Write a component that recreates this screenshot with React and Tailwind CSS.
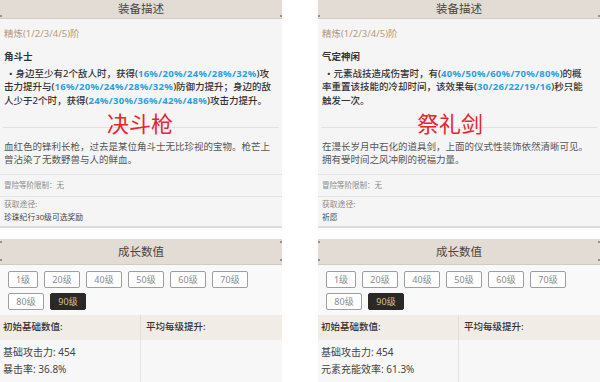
import React from "react";

const B = ({ children }) => (
  <span className="font-bold tracking-[0.3px] text-[#2a9ee0]">{children}</span>
);

const panels = [
  {
    key: "l",
    name: "角斗士",
    lines: [
      <>・身边至少有2个敌人时，获得(<B>16%/20%/24%/28%/32%</B>)攻</>,
      <>击力提升与(<B>16%/20%/24%/28%/32%</B>)防御力提升；身边的敌</>,
      <>人少于2个时，获得(<B>24%/30%/36%/42%/48%</B>)攻击力提升。</>,
    ],
    label: "决斗枪",
    labelCls: "pr-[2px]",
    desc: ["血红色的锋利长枪，过去是某位角斗士无比珍视的宝物。枪芒上", "曾沾染了无数野兽与人的鲜血。"],
    source: "珍珠纪行30级可选奖励",
    stats: ["基础攻击力: 454", "暴击率: 36.8%"],
  },
  {
    key: "r",
    name: "气定神闲",
    lines: [
      <>・元素战技造成伤害时，有(<B>40%/50%/60%/70%/80%</B>)的概</>,
      <>率重置该技能的冷却时间，该效果每(<B>30/26/22/19/16</B>)秒只能</>,
      <>触发一次。</>,
    ],
    label: "祭礼剑",
    labelCls: "pr-[18px]",
    desc: ["在漫长岁月中石化的道具剑，上面的仪式性装饰依然清晰可见。", "拥有受时间之风冲刷的祝福力量。"],
    source: "祈愿",
    stats: ["基础攻击力: 454", "元素充能效率: 61.3%"],
  },
];

const levels = ["1级", "20级", "40级", "50级", "60级", "70级", "80级", "90级"];

function Panel({ d }) {
  return (
    <div className="w-[282px] shrink-0">
      <div className="relative h-[19px] bg-[#e3dcd4] border-b border-[#d3cac0] flex items-center justify-center text-[11.5px] leading-none text-[#4a4440]">
        装备描述
        <span className="absolute left-0 bottom-[1px] h-[2px] w-[2px] bg-[#9b918a]" />
        <span className="absolute right-0 bottom-[1px] h-[2px] w-[2px] bg-[#9b918a]" />
      </div>
      <div className="bg-[#f5f5f6] border-b-2 border-[#dcdcdc]">
        <div className="relative h-[108px] px-[4px] pt-[8px] whitespace-nowrap">
          <div className="text-[9.5px] leading-[13px] text-[#b79a7f]">精炼(1/2/3/4/5)阶</div>
          <div className="mt-[10px] text-[9.5px] leading-[14px] font-bold text-[#333]">{d.name}</div>
          <div className="mt-[2.5px] text-[9.5px] leading-[13.5px] font-medium text-[#333]">
            {d.lines.map((l, i) => (
              <div key={i} className={i === 0 ? "pl-[2px]" : ""}>{l}</div>
            ))}
          </div>
          <div className={`absolute left-0 right-0 top-[93px] text-center text-[22px] leading-none text-[#e8242c] ${d.labelCls}`}>
            {d.label}
          </div>
        </div>
        <div className="mx-[3px] h-px bg-[#e2e2e2]" />
        <div className="h-[47px] px-[4px] pt-[12px] border-b border-[#e3e3e3] text-[9.5px] leading-[13px] text-[#555] whitespace-nowrap">
          {d.desc.map((t, i) => (
            <div key={i}>{t}</div>
          ))}
        </div>
        <div className="h-[22px] px-[4px] flex items-center border-b border-[#e3e3e3] text-[7.5px] text-[#8a8a8a]">
          冒险等阶限制：无
        </div>
        <div className="h-[29px] px-[4px] pt-[1px] text-[7.8px] leading-[12.5px]">
          <div className="text-[#8a8a8a]">获取途径:</div>
          <div className="text-[#444]">{d.source}</div>
        </div>
      </div>

      <div className="mt-[11px] relative h-[26px] bg-[#e3dcd4] border-b border-[#d3cac0] flex items-center justify-center text-[11.5px] leading-none text-[#4a4440]">
        成长数值
        <span className="absolute left-0 top-[2px] h-[2px] w-[2px] bg-[#9b918a]" />
        <span className="absolute right-0 top-[2px] h-[2px] w-[2px] bg-[#9b918a]" />
        <span className="absolute left-0 bottom-[3px] h-[2px] w-[2px] bg-[#9b918a]" />
        <span className="absolute right-0 bottom-[3px] h-[2px] w-[2px] bg-[#9b918a]" />
      </div>
      <div className="bg-[#f9f9f9] pt-[6px] pl-[8px] pb-[5px] flex flex-wrap gap-x-[6px] gap-y-[5px]">
        {levels.map((lv, i) => {
          const active = lv === "90级";
          return (
            <div
              key={lv}
              className={
                active
                  ? "h-[17px] w-[36px] rounded-[2px] border border-[#2b2826] bg-[#2b2826] text-[#d8c08e] text-[9px] flex items-center justify-center"
                  : i === 0
                  ? "h-[17px] w-[30px] rounded-[2px] border border-[#9e9e9e] bg-white text-[#8a8a8a] text-[9px] flex items-center justify-center"
                  : "h-[17px] w-[36px] rounded-[2px] border border-[#9e9e9e] bg-white text-[#8a8a8a] text-[9px] flex items-center justify-center"
              }
            >
              {lv}
            </div>
          );
        })}
      </div>
      <div className="grid grid-cols-[140px_1fr] h-[25px] bg-[#f1ece6] text-[9.5px] font-medium text-[#333]">
        <div className="flex items-center pl-[3px]">初始基础数值:</div>
        <div className="flex items-center pl-[5px] border-l border-[#e4ded7]">平均每级提升:</div>
      </div>
      <div className="grid grid-cols-[140px_1fr] h-[60px] bg-[#f7f7f7] text-[10px] text-[#444]">
        <div className="pt-[4px] pl-[3px] leading-[17px]">
          {d.stats.map((s) => (
            <div key={s}>{s}</div>
          ))}
        </div>
        <div className="border-l border-[#e4e4e4]" />
      </div>
    </div>
  );
}

export default function App() {
  return (
    <div className="w-[600px] h-[382px] overflow-hidden bg-white flex gap-[36px] font-['Noto_Sans','Noto_Sans_CJK_SC',sans-serif]">
      {panels.map((d) => (
        <Panel key={d.key} d={d} />
      ))}
    </div>
  );
}
